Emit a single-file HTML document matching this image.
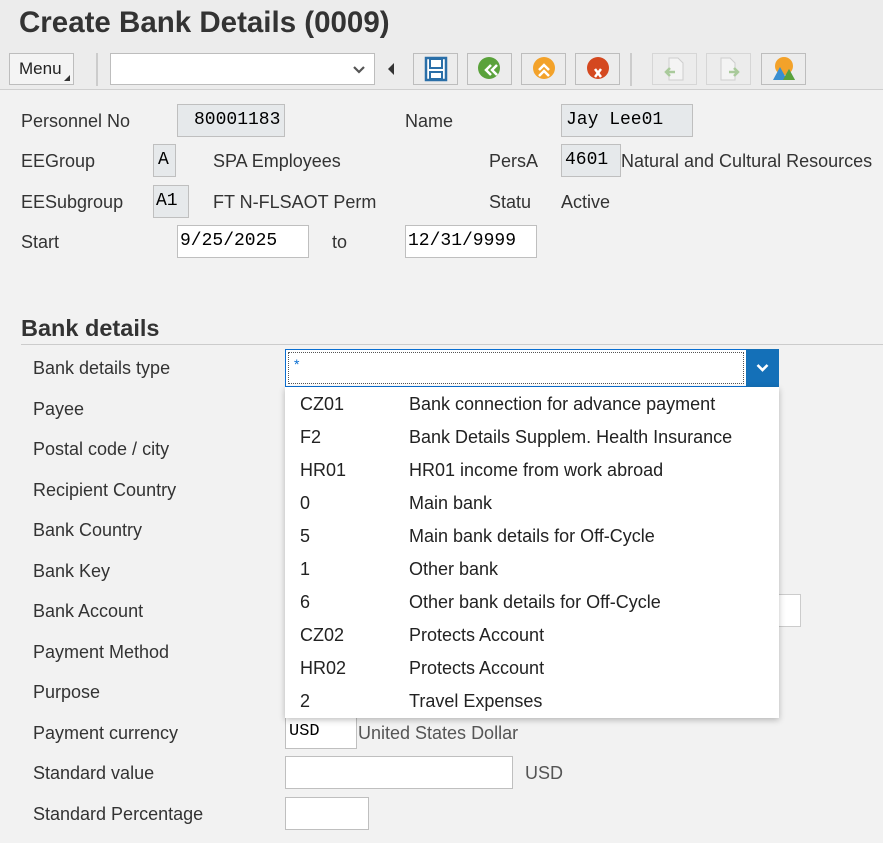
<!DOCTYPE html>
<html><head><meta charset="utf-8"><style>
*{margin:0;padding:0;box-sizing:border-box}
body{width:883px;height:843px;overflow:hidden;background:#f2f2f2;font-family:"Liberation Sans",Arial,sans-serif;position:relative;color:#333}
.a{position:absolute}
.t{position:absolute;font-size:18px;color:#333;line-height:20px;white-space:nowrap}
.box{position:absolute;border:1px solid #bfbfbf;background:#fff;font-family:"Liberation Mono",monospace;font-size:18px;color:#000;padding-left:8px;line-height:30px}
.ro{background:#e6e9eb}
.btn{position:absolute;top:53px;width:45px;height:32px;border:1px solid #bdbdbd;background:#ececec;display:flex;align-items:center;justify-content:center}
.sep{position:absolute;top:53px;width:2px;height:33px;background:#ccc}
.it{position:absolute;left:0;width:494px;height:33px;font-size:18px;color:#222;line-height:33px}
.it span{position:absolute}
</style></head><body>
<div class="a" style="left:0;top:0;width:883px;height:90px;background:#ececec;border-bottom:1px solid #cfcfcf"></div>
<div class="a" style="left:19px;top:6px;font-size:29.5px;font-weight:bold;color:#333">Create Bank Details (0009)</div>
<div class="a" style="left:9px;top:53px;width:65px;height:32px;border:1px solid #bdbdbd;background:#f4f4f4;font-size:17px;line-height:30px;padding-left:9px;color:#222">Menu<span style="position:absolute;right:3px;bottom:3px;width:0;height:0;border-left:6px solid transparent;border-bottom:6px solid #333"></span></div>
<div class="sep" style="left:96px"></div>
<div class="a" style="left:110px;top:53px;width:265px;height:32px;border:1px solid #bdbdbd;background:#fff"><svg class="a" style="left:242px;top:11px" width="12" height="10"><path d="M1 2l5 5 5-5" stroke="#555" stroke-width="2.2" fill="none"/></svg></div>
<div class="a" style="left:388px;top:63px;width:0;height:0;border-top:6px solid transparent;border-bottom:6px solid transparent;border-right:6px solid #333"></div>
<div class="btn" style="left:413px"><svg width="24" height="26"><rect x="2" y="2" width="20" height="22" fill="#fff" stroke="#2a6fa8" stroke-width="2.5"/><rect x="6" y="3" width="12" height="9" fill="#fff" stroke="#2a6fa8" stroke-width="2"/><rect x="6" y="16" width="12" height="7" fill="#fff" stroke="#2a6fa8" stroke-width="2"/></svg></div>
<div class="btn" style="left:467px"><svg width="26" height="26"><circle cx="12" cy="12" r="11" fill="#5aa23b"/><path d="M14 9l-5 5 5 5M20 9l-5 5 5 5" stroke="#fff" stroke-width="2.5" fill="none"/></svg></div>
<div class="btn" style="left:521px"><svg width="26" height="26"><circle cx="13" cy="12" r="11" fill="#f3a22a"/><path d="M8 14l5-5 5 5M8 20l5-5 5 5" stroke="#fff" stroke-width="2.5" fill="none"/></svg></div>
<div class="btn" style="left:575px"><svg width="26" height="26"><circle cx="13" cy="12" r="11" fill="#d4481f"/><path d="M10 13l6 8M16 13l-6 8" stroke="#fff" stroke-width="2.5"/></svg></div>
<div class="sep" style="left:630px"></div>
<div class="btn" style="left:652px;opacity:.45"><svg width="24" height="26"><path d="M6 2h9l5 5v17H6z" fill="#fff" stroke="#aaa"/><path d="M12 16H3M7 12l-4 4 4 4" stroke="#5aa23b" stroke-width="2.5" fill="none"/></svg></div>
<div class="btn" style="left:706px;opacity:.45"><svg width="24" height="26"><path d="M4 2h9l5 5v17H4z" fill="#fff" stroke="#aaa"/><path d="M12 16h9M17 12l4 4-4 4" stroke="#5aa23b" stroke-width="2.5" fill="none"/></svg></div>
<div class="btn" style="left:761px"><svg width="26" height="26"><circle cx="13" cy="10" r="9" fill="#f3a22a"/><path d="M2 24l7-13 5 9 4-7 6 11z" fill="#3a8fd0"/><path d="M12 24l6-11 6 11z" fill="#5aa23b"/></svg></div>

<div class="t" style="left:21px;top:111px">Personnel No</div>
<div class="box ro" style="left:177px;top:104px;width:108px;height:33px;padding-left:16px">80001183</div>
<div class="t" style="left:405px;top:111px">Name</div>
<div class="box ro" style="left:561px;top:104px;width:132px;height:33px;padding-left:4px">Jay Lee01</div>
<div class="t" style="left:21px;top:151px">EEGroup</div>
<div class="box ro" style="left:153px;top:144px;width:23px;height:33px;padding-left:4px">A</div>
<div class="t" style="left:213px;top:151px">SPA Employees</div>
<div class="t" style="left:489px;top:151px">PersA</div>
<div class="box ro" style="left:561px;top:144px;width:60px;height:33px;padding-left:3px">4601</div>
<div class="t" style="left:621px;top:151px">Natural and Cultural Resources</div>
<div class="t" style="left:21px;top:192px">EESubgroup</div>
<div class="box ro" style="left:153px;top:185px;width:36px;height:33px;padding-left:2px">A1</div>
<div class="t" style="left:213px;top:192px">FT N-FLSAOT Perm</div>
<div class="t" style="left:489px;top:192px">Statu</div>
<div class="t" style="left:561px;top:192px">Active</div>
<div class="t" style="left:21px;top:232px">Start</div>
<div class="box" style="left:177px;top:225px;width:132px;height:33px;padding-left:2px">9/25/2025</div>
<div class="t" style="left:332px;top:232px">to</div>
<div class="box" style="left:405px;top:225px;width:132px;height:33px;padding-left:2px">12/31/9999</div>

<div class="a" style="left:21px;top:315px;font-size:23.5px;font-weight:bold;color:#333">Bank details</div>
<div class="a" style="left:21px;top:344px;width:862px;height:1px;background:#ccc"></div>

<div class="t" style="left:33px;top:358px">Bank details type</div>
<div class="t" style="left:33px;top:399px">Payee</div>
<div class="t" style="left:33px;top:439px">Postal code / city</div>
<div class="t" style="left:33px;top:480px">Recipient Country</div>
<div class="t" style="left:33px;top:520px">Bank Country</div>
<div class="t" style="left:33px;top:561px">Bank Key</div>
<div class="t" style="left:33px;top:601px">Bank Account</div>
<div class="t" style="left:33px;top:642px">Payment Method</div>
<div class="t" style="left:33px;top:682px">Purpose</div>
<div class="t" style="left:33px;top:723px">Payment currency</div>
<div class="t" style="left:33px;top:763px">Standard value</div>
<div class="t" style="left:33px;top:804px">Standard Percentage</div>

<div class="a" style="left:700px;top:594px;width:101px;height:33px;border:1px solid #ccc;background:#fff"></div>
<div class="box" style="left:285px;top:716px;width:72px;height:33px;padding-left:3px;font-size:17px">USD</div>
<div class="t" style="left:358px;top:723px;color:#555">United States Dollar</div>
<div class="box" style="left:285px;top:756px;width:228px;height:33px"></div>
<div class="t" style="left:525px;top:763px;color:#555">USD</div>
<div class="box" style="left:285px;top:797px;width:84px;height:33px"></div>

<div class="a" style="left:285px;top:349px;width:462px;height:38px;border:1px solid #0a6ed1;background:#fff"><div class="a" style="left:2px;top:2px;right:2px;bottom:2px;border:1px dotted #555"></div><span class="a" style="left:8px;top:6px;color:#0a6ed1;font-size:14px">*</span></div>
<div class="a" style="left:746px;top:349px;width:33px;height:38px;background:#1470b8"><svg class="a" style="left:10px;top:14px" width="13" height="10"><path d="M1.5 2l5 5 5-5" stroke="#fff" stroke-width="2.6" fill="none"/></svg></div>

<div class="a" style="left:285px;top:387px;width:494px;height:331px;background:#fff;box-shadow:0 2px 6px rgba(0,0,0,.25)">
<div class="it" style="top:1px"><span style="left:15px">CZ01</span><span style="left:124px">Bank connection for advance payment</span></div>
<div class="it" style="top:34px"><span style="left:15px">F2</span><span style="left:124px">Bank Details Supplem. Health Insurance</span></div>
<div class="it" style="top:67px"><span style="left:15px">HR01</span><span style="left:124px">HR01 income from work abroad</span></div>
<div class="it" style="top:100px"><span style="left:15px">0</span><span style="left:124px">Main bank</span></div>
<div class="it" style="top:133px"><span style="left:15px">5</span><span style="left:124px">Main bank details for Off-Cycle</span></div>
<div class="it" style="top:166px"><span style="left:15px">1</span><span style="left:124px">Other bank</span></div>
<div class="it" style="top:199px"><span style="left:15px">6</span><span style="left:124px">Other bank details for Off-Cycle</span></div>
<div class="it" style="top:232px"><span style="left:15px">CZ02</span><span style="left:124px">Protects Account</span></div>
<div class="it" style="top:265px"><span style="left:15px">HR02</span><span style="left:124px">Protects Account</span></div>
<div class="it" style="top:298px"><span style="left:15px">2</span><span style="left:124px">Travel Expenses</span></div>
</div>
</body></html>
